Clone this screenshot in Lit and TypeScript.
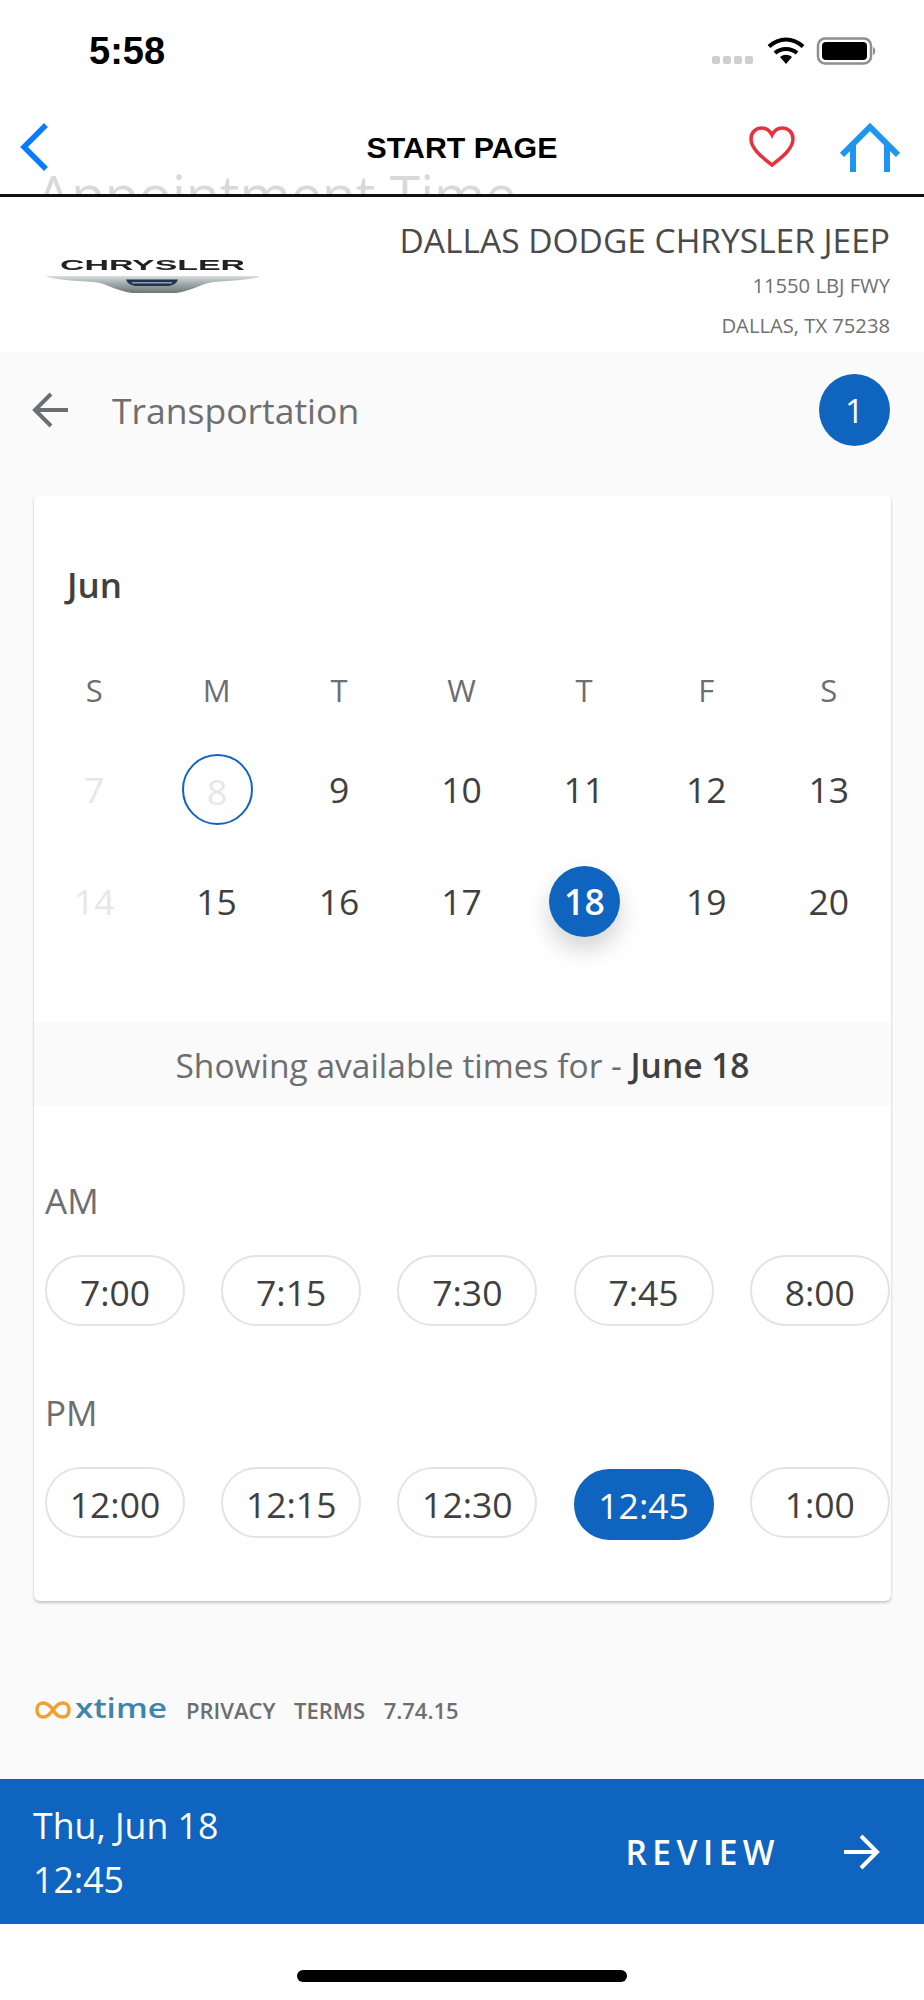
import { LitElement, html, css } from "lit";
import { customElement } from "lit/decorators.js";

const WEEK = ["S", "M", "T", "W", "T", "F", "S"];
type Day = { n: number; kind?: "off" | "today" | "sel" };
const DAYS: Day[] = [
  { n: 7, kind: "off" }, { n: 8, kind: "today" }, { n: 9 }, { n: 10 }, { n: 11 }, { n: 12 }, { n: 13 },
  { n: 14, kind: "off" }, { n: 15 }, { n: 16 }, { n: 17 }, { n: 18, kind: "sel" }, { n: 19 }, { n: 20 },
];
const AM = ["7:00", "7:15", "7:30", "7:45", "8:00"];
const PM = ["12:00", "12:15", "12:30", "12:45", "1:00"];

@customElement("app-root")
export class AppRoot extends LitElement {
  static styles = css`
    :host { display: block; width: 924px; height: 2000px; background: #fff; font-family: "Open Sans", sans-serif; color: #404040; overflow: hidden; }
    .page { display: flex; flex-direction: column; height: 2000px; }
    .status { height: 90px; display: flex; align-items: flex-start; justify-content: space-between; box-sizing: border-box; padding: 31px 48px 0 89px; }
    .clock { font: 700 38px/40px "Liberation Sans", Arial, sans-serif; color: #000; }
    .status-icons { display: block; margin-top: 6px; }
    .nav { position: relative; height: 104px; border-bottom: 3px solid #111; box-sizing: content-box; display: grid; grid-template-columns: 1fr auto 1fr; align-items: center; overflow: hidden; background: #fff; }
    .ghost { position: absolute; left: 36px; top: 79px; font-size: 55.300px; line-height: 50px; color: #d9d9d9; white-space: nowrap; }
    .nav-left { padding-left: 19px; display: flex; position: relative; top: 5px; }
    .title { font: 700 30.300px/40px "Liberation Sans", Arial, sans-serif; color: #000; position: relative; top: 6px; }
    .nav-right { display: flex; justify-content: flex-end; align-items: center; gap: 45px; padding-right: 24px; position: relative; top: 5px; }
    .dealer { height: 155px; background: #fff; display: flex; justify-content: space-between; align-items: flex-start; box-sizing: border-box; padding: 18px 34px 0 46px; }
    .logo { display: block; margin-top: 42px; filter: blur(0.5px); }
    .dealer-info { text-align: right; }
    .dealer-name { font-size: 33.500px; line-height: 50px; color: #4a4a4a; }
    .dealer-line { font-size: 20.200px; line-height: 40px; color: #707070; }
    .main { flex: 1; background: #fafafa; display: flex; flex-direction: column; }
    .step { height: 116px; display: flex; align-items: center; padding: 0 34px 0 32px; margin-bottom: 28px; }
    .step-title { font-size: 35.500px; color: #6d6e71; margin-left: 44px; flex: 1; }
    .badge { width: 71px; height: 72px; border-radius: 50%; background: #0f64bf; color: #fff; font-size: 33px; display: flex; align-items: center; justify-content: center; }
    .card { width: 857px; margin-left: 34px; box-sizing: border-box; height: 1105px; background: #fff; box-shadow: 0 2px 3px rgba(0,0,0,.2), 0 0 1px rgba(0,0,0,.12); border-radius: 3px 3px 6px 6px; overflow: hidden; }
    .month { padding: 64px 0 0 33px; font-size: 35px; line-height: 50px; font-weight: 600; color: #404040; }
    .grid { display: grid; grid-template-columns: repeat(7, 1fr); justify-items: center; align-items: center; margin-left: -1px; margin-right: 1px; }
    .week { margin-top: 55px; height: 50px; font-size: 31px; color: #6d6e71; }
    .days { margin-top: 18px; grid-auto-rows: 112px; font-size: 35.500px; }
    .day { width: 71px; height: 71px; box-sizing: border-box; border-radius: 50%; display: flex; align-items: center; justify-content: center; color: #404040; }
    .day.off { color: #e6e7e8; }
    .day.today { color: #e6e7e8; border: 2px solid #0f64bf; padding-top: 4px; margin-left: 1px; }
    .day.sel { background: #0f64bf; color: #fff; font-weight: 600; box-shadow: 0 12px 24px rgba(0,0,0,.18); margin-left: 1px; }
    .strip { margin-top: 65px; height: 84px; background: #fafafa; display: flex; align-items: center; justify-content: center; font-size: 33.500px; color: #6d6e71; white-space: pre; padding-top: 2px; box-sizing: border-box; }
    .strip b { color: #404040; font-weight: 600; }
    .label { padding-left: 11px; font-size: 35px; line-height: 40px; color: #6d6e71; }
    .label.am { margin-top: 75px; }
    .label.pm { margin-top: 67px; }
    .pills { display: flex; gap: 36.200px; padding-left: 11px; margin-top: 34px; }
    .pill { flex: none; width: 140px; height: 71px; box-sizing: border-box; border: 2px solid #e3e3e3; border-radius: 36px; display: flex; align-items: center; justify-content: center; font-size: 35.500px; padding-top: 2px; color: #404040; background: #fff; }
    .pill.sel { background: #0f64bf; border-color: #0f64bf; color: #fff; position: relative; top: 2px; padding-top: 0; }
    .foot { margin-top: 89px; height: 40px; display: flex; align-items: center; padding-left: 35px; color: #6d6e71; font-size: 22px; font-weight: 600; }
    .foot svg { display: block; margin-right: 15px; }
    .foot span { margin-right: 18.500px; }
    .bar { height: 145px; background: #0f64bf; color: #fff; display: flex; align-items: center; justify-content: space-between; padding: 0 44px 0 33px; }
    .when { font-size: 35.700px; line-height: 54px; }
    .go { display: flex; align-items: center; gap: 64px; }
    .review { font-size: 33.500px; letter-spacing: 5.500px; font-weight: 600; }
    .home { height: 76px; display: flex; justify-content: center; padding-top: 46px; box-sizing: border-box; }
    .home i { display: block; width: 330px; height: 12px; border-radius: 6px; background: #000; }
  `;

  private statusIcons() {
    return html`<svg class="status-icons" width="164" height="30" viewBox="0 0 164 30">
      <g fill="#cfcfcf">
        <rect x="0" y="19" width="8" height="8" rx="2"/><rect x="11" y="19" width="8" height="8" rx="2"/>
        <rect x="22" y="19" width="8" height="8" rx="2"/><rect x="33" y="19" width="8" height="8" rx="2"/>
      </g>
      <g fill="none" stroke="#000" stroke-width="4">
        <path d="M57 9.500 C67 0 81 0 91 9.500"/>
        <path d="M63 16 C69 10.500 79 10.500 85 16"/>
      </g>
      <path d="M68 20 C72 17 76 17 80 20 L74 27 Z" fill="#000"/>
      <rect x="106" y="1.500" width="53" height="25" rx="7" fill="none" stroke="#8e8e8e" stroke-width="2.500"/>
      <rect x="110" y="5" width="45" height="18" rx="4" fill="#000"/>
      <path d="M161 10 C164 11 164 17 161 18 Z" fill="#8e8e8e"/>
    </svg>`;
  }

  private chryslerLogo() {
    return html`<svg class="logo" width="216" height="40" viewBox="0 0 216 40">
      <defs>
        <linearGradient id="wing" x1="0" y1="0" x2="0" y2="1">
          <stop offset="0" stop-color="#d9dfdf"/><stop offset=".4" stop-color="#a6aeb0"/><stop offset="1" stop-color="#6f7678"/>
        </linearGradient>
      </defs>
      <text x="14" y="12.500" textLength="185" lengthAdjust="spacingAndGlyphs" font-family="Liberation Sans" font-weight="700" font-size="15" fill="#222">CHRYSLER</text>
      <path d="M0 19 L214 19 C211 22 190 24 168 25 C156 26 146 34 130 36 L86 36 C70 34 60 26 48 25 C26 24 4 22 0 19 Z" fill="url(#wing)"/>
      <path d="M80 22.500 L132 22.500 C131 26 127 28.500 122 29 L90 29 C85 28.500 81 26 80 22.500 Z" fill="#24324e"/>
      <rect x="86" y="25" width="40" height="1.500" fill="#8f9bb0"/>
    </svg>`;
  }

  private xtimeLogo() {
    return html`<svg width="136" height="40" viewBox="0 -8 136 40">
      <path d="M19 13 C15 7 12 5 8 5 C4 5 2 8 2 12 C2 16 4 19 8 19 C12 19 14 17 18 12 C22 7 24 5 28 5 C32 5 34 8 34 12 C34 16 32 19 28 19 C24 19 21 17 19 13" fill="none" stroke="#f0a030" stroke-width="3.500"/>
      <text x="40" y="20" textLength="92" lengthAdjust="spacingAndGlyphs" font-family="Open Sans" font-size="27" fill="#3f85aa">xtime</text>
    </svg>`;
  }

  render() {
    return html`<div class="page">
      <div class="status"><div class="clock">5:58</div>${this.statusIcons()}</div>
      <div class="nav">
        <div class="ghost">Appointment Time</div>
        <div class="nav-left">
          <svg width="30" height="48" viewBox="0 0 30 48"><path d="M27 2 L5 24 L27 46" fill="none" stroke="#0a7aff" stroke-width="5.500"/></svg>
        </div>
        <div class="title">START PAGE</div>
        <div class="nav-right">
          <svg width="46" height="42" viewBox="0 0 46 42"><path d="M23 39 C14 32 2 23 2 13 C2 6 7 2 13 2 C18 2 21 5 23 9 C25 5 28 2 33 2 C39 2 44 6 44 13 C44 23 32 32 23 39 Z" fill="none" stroke="#e5323e" stroke-width="3.500"/></svg>
          <svg width="60" height="50" viewBox="0 0 60 50"><path d="M2 33 L30 5 L58 33 M13 22 V50 M47 22 V50" fill="none" stroke="#1e96f0" stroke-width="6"/></svg>
        </div>
      </div>
      <div class="dealer">
        ${this.chryslerLogo()}
        <div class="dealer-info">
          <div class="dealer-name">DALLAS DODGE CHRYSLER JEEP</div>
          <div class="dealer-line">11550 LBJ FWY</div>
          <div class="dealer-line">DALLAS, TX 75238</div>
        </div>
      </div>
      <div class="main">
        <div class="step">
          <svg width="36" height="36" viewBox="0 0 36 36"><path d="M36 18 H3 M19 2 L3 18 L19 34" fill="none" stroke="#6d6e71" stroke-width="4"/></svg>
          <div class="step-title">Transportation</div>
          <div class="badge">1</div>
        </div>
        <div class="card">
          <div class="month">Jun</div>
          <div class="grid week">${WEEK.map((d) => html`<div>${d}</div>`)}</div>
          <div class="grid days">${DAYS.map((d) => html`<div class="day ${d.kind ?? ""}">${d.n}</div>`)}</div>
          <div class="strip">Showing available times for - <b>June 18</b></div>
          <div class="label am">AM</div>
          <div class="pills">${AM.map((t) => html`<div class="pill">${t}</div>`)}</div>
          <div class="label pm">PM</div>
          <div class="pills">${PM.map((t) => html`<div class="pill ${t === "12:45" ? "sel" : ""}">${t}</div>`)}</div>
        </div>
        <div class="foot">
          ${this.xtimeLogo()}
          <span>PRIVACY</span><span>TERMS</span><span>7.74.15</span>
        </div>
      </div>
      <div class="bar">
        <div class="when"><div>Thu, Jun 18</div><div>12:45</div></div>
        <div class="go">
          <div class="review">REVIEW</div>
          <svg width="36" height="36" viewBox="0 0 36 36"><path d="M0 18 H33 M17 2 L33 18 L17 34" fill="none" stroke="#fff" stroke-width="4"/></svg>
        </div>
      </div>
      <div class="home"><i></i></div>
    </div>`;
  }
}
